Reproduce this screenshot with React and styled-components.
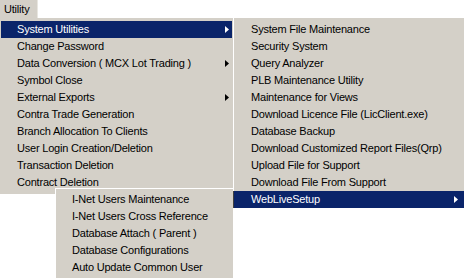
import React from "react";
import styled, { createGlobalStyle, css } from "styled-components";

const Global = createGlobalStyle`
  html, body { margin: 0; padding: 0; background: #ffffff; }
  body { font-family: "Liberation Sans", Arial, sans-serif; }
`;

const Screen = styled.div`
  position: relative;
  width: 464px;
  height: 278px;
  overflow: hidden;
  background: #ffffff;
  font-family: "Liberation Sans", Arial, sans-serif;
  font-size: 11px;
  letter-spacing: -0.2px;
  color: #000;
`;

const MenuBar = styled.div`
  display: flex;
  height: 18px;
`;

const MenuTitle = styled.div`
  display: flex;
  align-items: center;
  height: 18px;
  padding: 0 4px;
  width: 29px;
  background: #d4d0c8;
  border-right: 1px solid #e8e6e0;
`;

const Popup = styled.div`
  position: absolute;
  left: ${p => p.$left}px;
  top: ${p => p.$top}px;
  width: ${p => p.$width}px;
  height: ${p => p.$height}px;
  box-sizing: border-box;
  background: #d4d0c8;
  display: flex;
  flex-direction: column;
  padding: ${p => p.$pad};
  ${p => p.$lightLeft && css`border-left: 1px solid #ffffff;`}
  ${p => p.$lightTop && css`border-top: 1px solid #ffffff;`}
`;

const Item = styled.div`
  display: flex;
  align-items: center;
  justify-content: space-between;
  height: 17px;
  flex: none;
  padding-left: ${p => p.$indent}px;
  padding-right: ${p => p.$arrowGap}px;
  white-space: nowrap;
  ${p => p.$active && css`
    background: #0a246a;
    color: #ffffff;
  `}
  ${p => p.$edge && css`box-shadow: -1px 0 0 #404040;`}
`;

const Label = styled.span`
  line-height: 17px;
`;

const Arrow = ({ color }) => (
  <svg width="4" height="7" viewBox="0 0 4 7" style={{ display: "block" }}>
    <polygon points="0,0 4,3.5 0,7" fill={color} />
  </svg>
);

const MenuItem = ({ label, sub, active, edge, indent = 16, arrowGap = 4 }) => (
  <Item $active={active} $edge={edge} $indent={indent} $arrowGap={arrowGap}>
    <Label>{label}</Label>
    {sub && <Arrow color={active ? "#ffffff" : "#000000"} />}
  </Item>
);

const mainItems = [
  { label: "System Utilities", sub: true, active: true },
  { label: "Change Password" },
  { label: "Data Conversion ( MCX Lot Trading )", sub: true },
  { label: "Symbol Close" },
  { label: "External Exports", sub: true },
  { label: "Contra Trade Generation" },
  { label: "Branch Allocation To Clients" },
  { label: "User Login Creation/Deletion" },
  { label: "Transaction Deletion" },
  { label: "Contract Deletion" },
];

const sysItems = [
  { label: "System File Maintenance" },
  { label: "Security System" },
  { label: "Query Analyzer" },
  { label: "PLB Maintenance Utility" },
  { label: "Maintenance for Views" },
  { label: "Download Licence File (LicClient.exe)" },
  { label: "Database Backup" },
  { label: "Download Customized Report Files(Qrp)" },
  { label: "Upload File for Support" },
  { label: "Download File From Support" },
  { label: "WebLiveSetup", sub: true, active: true, edge: true },
];

const webItems = [
  { label: "I-Net Users Maintenance" },
  { label: "I-Net Users Cross Reference" },
  { label: "Database Attach ( Parent )" },
  { label: "Database Configurations" },
  { label: "Auto Update Common User" },
];

export default function App() {
  return (
    <>
      <Global />
      <Screen>
        <MenuBar>
          <MenuTitle>Utility</MenuTitle>
        </MenuBar>

        <Popup $left={0} $top={18} $width={233} $height={176} $pad="3px 1px">
          {mainItems.map(it => (
            <MenuItem key={it.label} {...it} indent={16} arrowGap={3} />
          ))}
        </Popup>

        <Popup $left={233} $top={18} $width={231} $height={190} $pad="3px 0 0 0" $lightLeft>
          {sysItems.map(it => (
            <MenuItem key={it.label} {...it} indent={17} arrowGap={6} />
          ))}
        </Popup>

        <Popup $left={55} $top={188} $width={178} $height={92} $pad="2px 0 0 0" $lightLeft $lightTop>
          {webItems.map(it => (
            <MenuItem key={it.label} {...it} indent={16} />
          ))}
        </Popup>
      </Screen>
    </>
  );
}
